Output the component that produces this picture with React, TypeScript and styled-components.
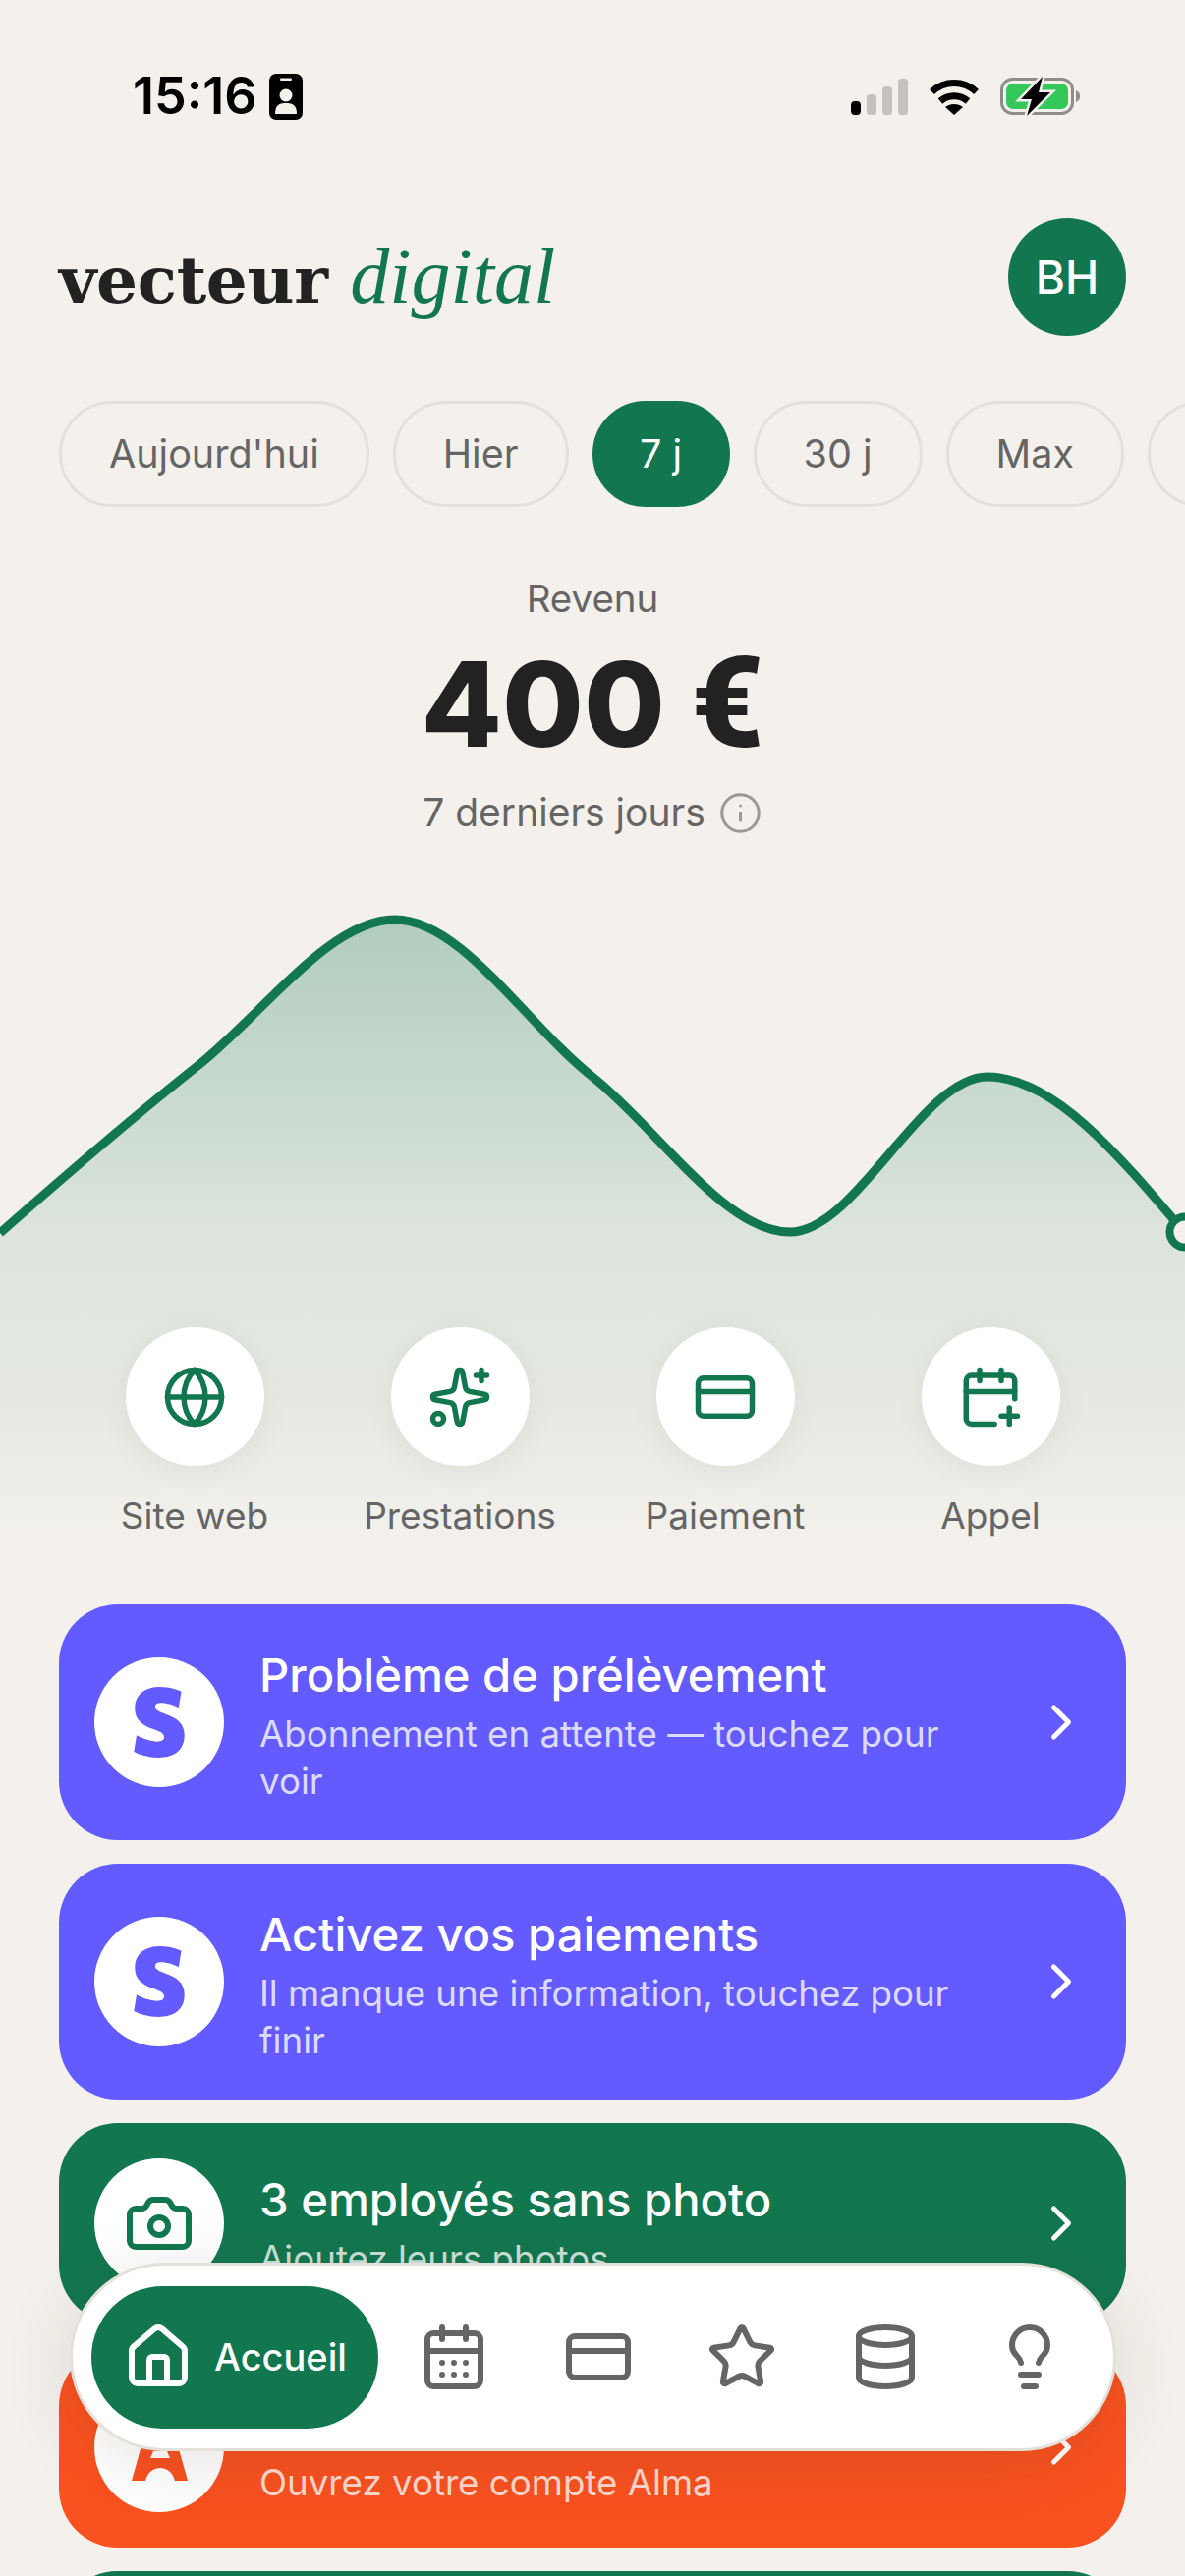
import React from "react";
import styled, { createGlobalStyle } from "styled-components";
import {
  CalendarDays, CalendarPlus, Camera, ChevronRight, CreditCard, Database, Globe, House, Info, Lightbulb, Sparkles, Star,
} from "lucide-react";
import { SiStripe } from "react-icons/si";

const GREEN = "#12774F";
const GREY = "#656565";

const Global = createGlobalStyle`
  html, body { margin: 0; padding: 0; width: 1206px; height: 2622px; overflow: hidden; background: #F4F1EC; }
  * { box-sizing: border-box; }
  #root { width: 1206px; height: 2622px; }
`;

const Screen = styled.div`
  position: relative; width: 1206px; height: 2622px; overflow: hidden;
  background: #F4F1EC; font-family: Inter, "Liberation Sans", sans-serif; color: #222;
`;
const StatusBar = styled.div`
  height: 192px; padding: 70px 106px 0 135px; display: flex; justify-content: space-between; align-items: flex-start;
`;
const Clock = styled.div`display: flex; align-items: center; gap: 12px; font-size: 52px; line-height: 56px; font-weight: 600; color: #000;`;
const Indicators = styled.div`display: flex; align-items: center; gap: 22px; height: 56px;`;

const Header = styled.header`
  height: 150px; padding: 29px 60px 0; display: flex; justify-content: space-between; align-items: flex-start;
`;
const Logo = styled.div`
  font-family: "DejaVu Serif", serif; font-size: 66px; line-height: 120px; font-weight: 700; color: #222; letter-spacing: -0.3px;
  em { font-family: "Liberation Serif", serif; font-size: 80px; font-weight: 400; font-style: italic; color: ${GREEN}; letter-spacing: 0; }
`;
const Avatar = styled.div`
  width: 120px; height: 120px; margin-top: 1px; border-radius: 50%; background: ${GREEN}; color: #fff; display: flex; align-items: center; justify-content: center;
  font-size: 46px; font-weight: 500;
`;
const Pills = styled.nav`display: flex; gap: 24px; padding: 66px 0 0 60px; overflow: hidden;`;
const Pill = styled.div<{ $on?: boolean }>`
  flex: none; height: 108px; padding: 0 ${(p) => (p.$on ? "45.5px" : "48px")}; border-radius: 54px; display: flex; align-items: center; font-size: 39.5px; font-weight: 400;
  border: 3px solid ${(p) => (p.$on ? GREEN : "#E4E1DA")};
  background: ${(p) => (p.$on ? GREEN : "transparent")};
  color: ${(p) => (p.$on ? "#fff" : GREY)};
`;
const Summary = styled.section`display: flex; flex-direction: column; align-items: center; padding-top: 69px;`;
const SummaryLabel = styled.div`font-size: 38.5px; line-height: 48px; color: ${GREY};`;
const Amount = styled.div`font-size: 120px; line-height: 144px; font-weight: 800; color: #222; margin-top: 12px;
  span { font-family: Roboto, sans-serif; font-weight: 900; font-size: 128px; line-height: 100px; }
`;
const Period = styled.div`display: flex; align-items: center; gap: 13px; font-size: 39px; line-height: 48px; color: ${GREY}; margin-top: 14px;`;

const Chart = styled.svg`display: block; width: 1206px; height: 670px; margin-top: 50px;`;
const Actions = styled.section`display: grid; grid-template-columns: repeat(4, 270px); justify-content: center; margin-top: -220px; position: relative;`;
const Action = styled.div`display: flex; flex-direction: column; align-items: center; gap: 27px;`;
const ActionCircle = styled.div`
  width: 141px; height: 141px; border-radius: 50%; background: #fff; color: ${GREEN}; display: flex; align-items: center; justify-content: center;
  box-shadow: 0 6px 30px rgba(90, 80, 60, 0.08);
`;
const ActionLabel = styled.div`font-size: 37px; line-height: 48px; color: ${GREY};`;

const Cards = styled.section`display: flex; flex-direction: column; gap: 24px; padding: 66px 60px 0;`;
const Card = styled.article<{ $bg: string }>`
  flex: none; display: flex; align-items: center; gap: 36px; padding: 36px; border-radius: 60px; background: ${(p) => p.$bg}; color: #fff;
`;
const CardIcon = styled.div<{ $fg: string }>`
  flex: none; width: 132px; height: 132px; border-radius: 50%; background: #fff; color: ${(p) => p.$fg}; display: flex; align-items: center; justify-content: center;
`;
const CardBody = styled.div`flex: 1; min-width: 0;`;
const CardTitle = styled.div`font-size: 47.2px; line-height: 72px; font-weight: 500;`;
const CardText = styled.div`font-size: 36.7px; line-height: 48px; color: rgba(255, 255, 255, 0.8);`;
const LastCard = styled.div`flex: none; height: 204px; border-radius: 60px; border: 5px solid ${GREEN}; background: #F4F1EC;`;

const Dock = styled.nav`
  position: absolute; left: 71px; top: 2303px; width: 1065px; height: 192px; border-radius: 96px; background: #fff; border: 3px solid #E4E1DA;
  padding: 21px 16px 21px 19px; display: flex; align-items: center; gap: 8px; box-shadow: 0 12px 72px rgba(60, 50, 30, 0.13);
`;
const DockActive = styled.div`
  flex: none; width: 292px; height: 145px; border-radius: 73px; background: ${GREEN}; color: #fff; display: flex; align-items: center; gap: 21px; padding-left: 32px;
  font-size: 38px; font-weight: 500;
`;
const DockItem = styled.div`flex: 1; display: flex; align-items: center; justify-content: center; color: ${GREY};`;

const Signal = () => (
  <svg width="58" height="37" viewBox="0 0 58 37" aria-hidden>
    <rect x="0" y="23" width="10" height="14" rx="4" fill="#000" />
    <rect x="16" y="16" width="10" height="21" rx="3.5" fill="#C5C1BC" />
    <rect x="32" y="8" width="10" height="29" rx="3.5" fill="#C5C1BC" />
    <rect x="48" y="0" width="10" height="37" rx="3.5" fill="#C5C1BC" />
  </svg>
);
const Wifi = () => (
  <svg width="50" height="37" viewBox="0 0 50 37" aria-hidden fill="none" stroke="#000" strokeWidth="7">
    <path d="M2.5 13.5C15 1.5 35 1.5 47.5 13.5" />
    <path d="M11 23c8-7 20-7 28 0" />
    <path d="M25 37l-9-8c5-4 13-4 18 0z" fill="#000" stroke="none" />
  </svg>
);
const Battery = () => (
  <svg width="82" height="40" viewBox="0 0 82 40" aria-hidden>
    <rect x="1.500" y="2.500" width="72" height="35" rx="11" fill="none" stroke="#8F8D8A" strokeWidth="3" />
    <rect x="6" y="7" width="63" height="26" rx="7" fill="#34C759" />
    <path d="M77 14c3 1 4 3 4 6s-1 5-4 6z" fill="#8F8D8A" />
    <path d="M43 0L21 23h11l-5 17 24-24H39z" fill="#000" stroke="#F4F1EC" strokeWidth="5" paintOrder="stroke" />
  </svg>
);
const Badge = () => (
  <svg width="34" height="47" viewBox="0 0 34 47" aria-hidden>
    <rect width="34" height="47" rx="7" fill="#000" />
    <rect x="11" y="4.500" width="12" height="2.500" rx="1.250" fill="#F4F1EC" />
    <circle cx="17" cy="22" r="6.500" fill="#F4F1EC" />
    <path d="M6 41c0-9 4-11 11-11s11 2 11 11z" fill="#F4F1EC" />
  </svg>
);
const Alma = () => (
  <svg width="57" height="68" viewBox="0 0 57 68" aria-hidden>
    <path d="M19 0h19l19 68H44c-2-8-8-13-15-13s-13 5-15 13H0z" fill="currentColor" />
    <path d="M22 38h14l3 7H19z" fill="#fff" />
  </svg>
);

const line =
  "M0 354C67 295 134 237 201 184C268 131 335 35 402 35C469 35 536 142 603 195C670 248 737 353 804 353C871 353 938 195 1005 195C1072 195 1139 275 1206 354";

const ACTIONS = [
  { label: "Site web", Icon: Globe },
  { label: "Prestations", Icon: Sparkles },
  { label: "Paiement", Icon: CreditCard },
  { label: "Appel", Icon: CalendarPlus },
];
const DOCK = [CalendarDays, CreditCard, Star, Database, Lightbulb];

export default function App() {
  return (
    <Screen>
      <Global />
      <StatusBar>
        <Clock>15:16 <Badge /></Clock>
        <Indicators><Signal /><Wifi /><Battery /></Indicators>
      </StatusBar>
      <Header>
        <Logo>vecteur <em>digital</em></Logo>
        <Avatar>BH</Avatar>
      </Header>
      <Pills>
        <Pill>Aujourd'hui</Pill>
        <Pill>Hier</Pill>
        <Pill $on>7 j</Pill>
        <Pill>30 j</Pill>
        <Pill>Max</Pill>
        <Pill>Perso</Pill>
      </Pills>
      <Summary>
        <SummaryLabel>Revenu</SummaryLabel>
        <Amount>400 <span>€</span></Amount>
        <Period>7 derniers jours <Info size={45} strokeWidth={1.6} color="#9b9997" /></Period>
      </Summary>
      <Chart viewBox="0 0 1206 670" aria-hidden>
        <defs>
          <linearGradient id="area" x1="0" y1="0" x2="0" y2="1">
            <stop offset="0" stopColor={GREEN} stopOpacity="0.3" />
            <stop offset="0.5" stopColor={GREEN} stopOpacity="0.105" />
            <stop offset="0.81" stopColor={GREEN} stopOpacity="0.055" />
            <stop offset="1" stopColor={GREEN} stopOpacity="0" />
          </linearGradient>
        </defs>
        <path d={`${line}V670H0Z`} fill="url(#area)" />
        <path d={line} fill="none" stroke={GREEN} strokeWidth="9" />
        <circle cx="1206" cy="353" r="15.500" fill="#F4F1EC" stroke={GREEN} strokeWidth="8" />
      </Chart>
      <Actions>
        {ACTIONS.map(({ label, Icon }) => (
          <Action key={label}>
            <ActionCircle><Icon size={66} strokeWidth={2} /></ActionCircle>
            <ActionLabel>{label}</ActionLabel>
          </Action>
        ))}
      </Actions>
      <Cards>
        <Card $bg="#635BFF">
          <CardIcon $fg="#635BFF"><SiStripe size={72} /></CardIcon>
          <CardBody>
            <CardTitle>Problème de prélèvement</CardTitle>
            <CardText>Abonnement en attente — touchez pour voir</CardText>
          </CardBody>
          <ChevronRight size={60} strokeWidth={2} />
        </Card>
        <Card $bg="#635BFF">
          <CardIcon $fg="#635BFF"><SiStripe size={72} /></CardIcon>
          <CardBody>
            <CardTitle>Activez vos paiements</CardTitle>
            <CardText>Il manque une information, touchez pour finir</CardText>
          </CardBody>
          <ChevronRight size={60} strokeWidth={2} />
        </Card>
        <Card $bg={GREEN}>
          <CardIcon $fg={GREEN}><Camera size={72} strokeWidth={2} /></CardIcon>
          <CardBody>
            <CardTitle>3 employés sans photo</CardTitle>
            <CardText>Ajoutez leurs photos</CardText>
          </CardBody>
          <ChevronRight size={60} strokeWidth={2} />
        </Card>
        <Card $bg="#F95120">
          <CardIcon $fg="#F95120"><Alma /></CardIcon>
          <CardBody>
            <CardTitle>Paiement en plusieurs fois</CardTitle>
            <CardText>Ouvrez votre compte Alma</CardText>
          </CardBody>
          <ChevronRight size={60} strokeWidth={2} />
        </Card>
        <LastCard />
      </Cards>
      <Dock>
        <DockActive><House size={72} strokeWidth={2} />Accueil</DockActive>
        {DOCK.map((Icon, i) => (
          <DockItem key={i}><Icon size={72} strokeWidth={2} /></DockItem>
        ))}
      </Dock>
    </Screen>
  );
}
